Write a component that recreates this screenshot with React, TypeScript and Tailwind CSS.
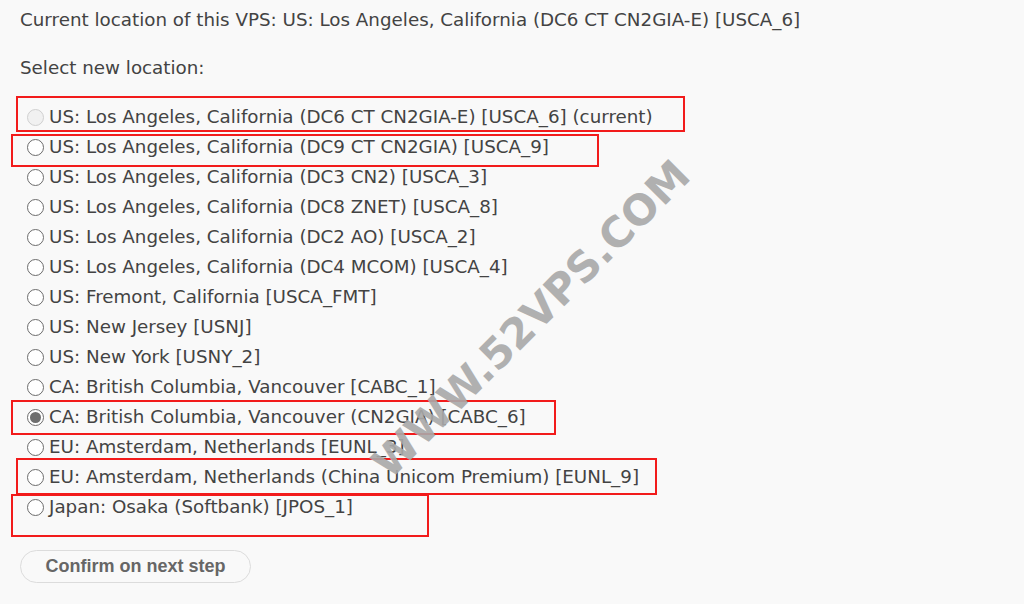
import React from "react";

const rows: { label: string; state?: "disabled" | "checked" }[] = [
  { label: "US: Los Angeles, California (DC6 CT CN2GIA-E) [USCA_6] (current)", state: "disabled" },
  { label: "US: Los Angeles, California (DC9 CT CN2GIA) [USCA_9]" },
  { label: "US: Los Angeles, California (DC3 CN2) [USCA_3]" },
  { label: "US: Los Angeles, California (DC8 ZNET) [USCA_8]" },
  { label: "US: Los Angeles, California (DC2 AO) [USCA_2]" },
  { label: "US: Los Angeles, California (DC4 MCOM) [USCA_4]" },
  { label: "US: Fremont, California [USCA_FMT]" },
  { label: "US: New Jersey [USNJ]" },
  { label: "US: New York [USNY_2]" },
  { label: "CA: British Columbia, Vancouver [CABC_1]" },
  { label: "CA: British Columbia, Vancouver (CN2GIA) [CABC_6]", state: "checked" },
  { label: "EU: Amsterdam, Netherlands [EUNL_3]" },
  { label: "EU: Amsterdam, Netherlands (China Unicom Premium) [EUNL_9]" },
  { label: "Japan: Osaka (Softbank) [JPOS_1]" },
];

function Radio({ state }: { state?: "disabled" | "checked" }) {
  if (state === "disabled") {
    return (
      <span className="w-[17px] h-[17px] rounded-full border border-[#d0d0d0] bg-[#f1f1f1] shrink-0" />
    );
  }
  if (state === "checked") {
    return (
      <span className="w-[17px] h-[17px] rounded-full border border-[#6b6b6b] bg-white shrink-0 flex items-center justify-center">
        <span className="w-[11px] h-[11px] rounded-full bg-[#6f6f6f]" />
      </span>
    );
  }
  return (
    <span className="w-[17px] h-[17px] rounded-full border border-[#6b6b6b] bg-white shrink-0" />
  );
}

const boxes = [
  "left-[16px] top-[96px] w-[669px] h-[36px]",
  "left-[11px] top-[134px] w-[588px] h-[33px]",
  "left-[11px] top-[400px] w-[545px] h-[35px]",
  "left-[16px] top-[458px] w-[641px] h-[37px]",
  "left-[11px] top-[494px] w-[418px] h-[43px]",
];

export default function App() {
  return (
    <div
      className="relative w-[1024px] h-[604px] overflow-hidden bg-[#f9f9f9] text-[#434343]"
      style={{ fontFamily: '"DejaVu Sans", Verdana, sans-serif' }}
    >
      <div className="pl-[20px] pt-[8px] text-[18.3px]">
        <div className="h-[24px] leading-[24px] whitespace-nowrap">
          Current location of this VPS: US: Los Angeles, California (DC6 CT CN2GIA-E) [USCA_6]
        </div>
        <div className="mt-[24px] h-[24px] leading-[24px]">Select new location:</div>
        <div className="mt-[22px] flex flex-col">
          {rows.map((r, i) => (
            <label key={i} className="flex items-center h-[30px] gap-[5px] pl-[7px]">
              <Radio state={r.state} />
              <span className="leading-[30px] whitespace-nowrap">{r.label}</span>
            </label>
          ))}
        </div>
        <button
          className="mt-[28px] w-[231px] h-[33px] rounded-full border border-[#dcdcdc] bg-[#f9f9f9] text-[#666] font-bold text-[18px]"
          style={{ fontFamily: '"Liberation Sans", Arial, sans-serif' }}
        >
          Confirm on next step
        </button>
      </div>

      {boxes.map((b, i) => (
        <div key={i} className={`absolute border-2 border-[#f21b1b] pointer-events-none ${b}`} />
      ))}

      <div
        className="absolute left-[531px] top-[319px] -translate-x-1/2 -translate-y-1/2 -rotate-45 whitespace-nowrap font-bold text-[42px] text-[#a9a9a9] opacity-90 pointer-events-none"
        style={{ fontFamily: '"DejaVu Sans", Verdana, sans-serif' }}
      >
        WWW.52VPS.COM
      </div>
    </div>
  );
}
